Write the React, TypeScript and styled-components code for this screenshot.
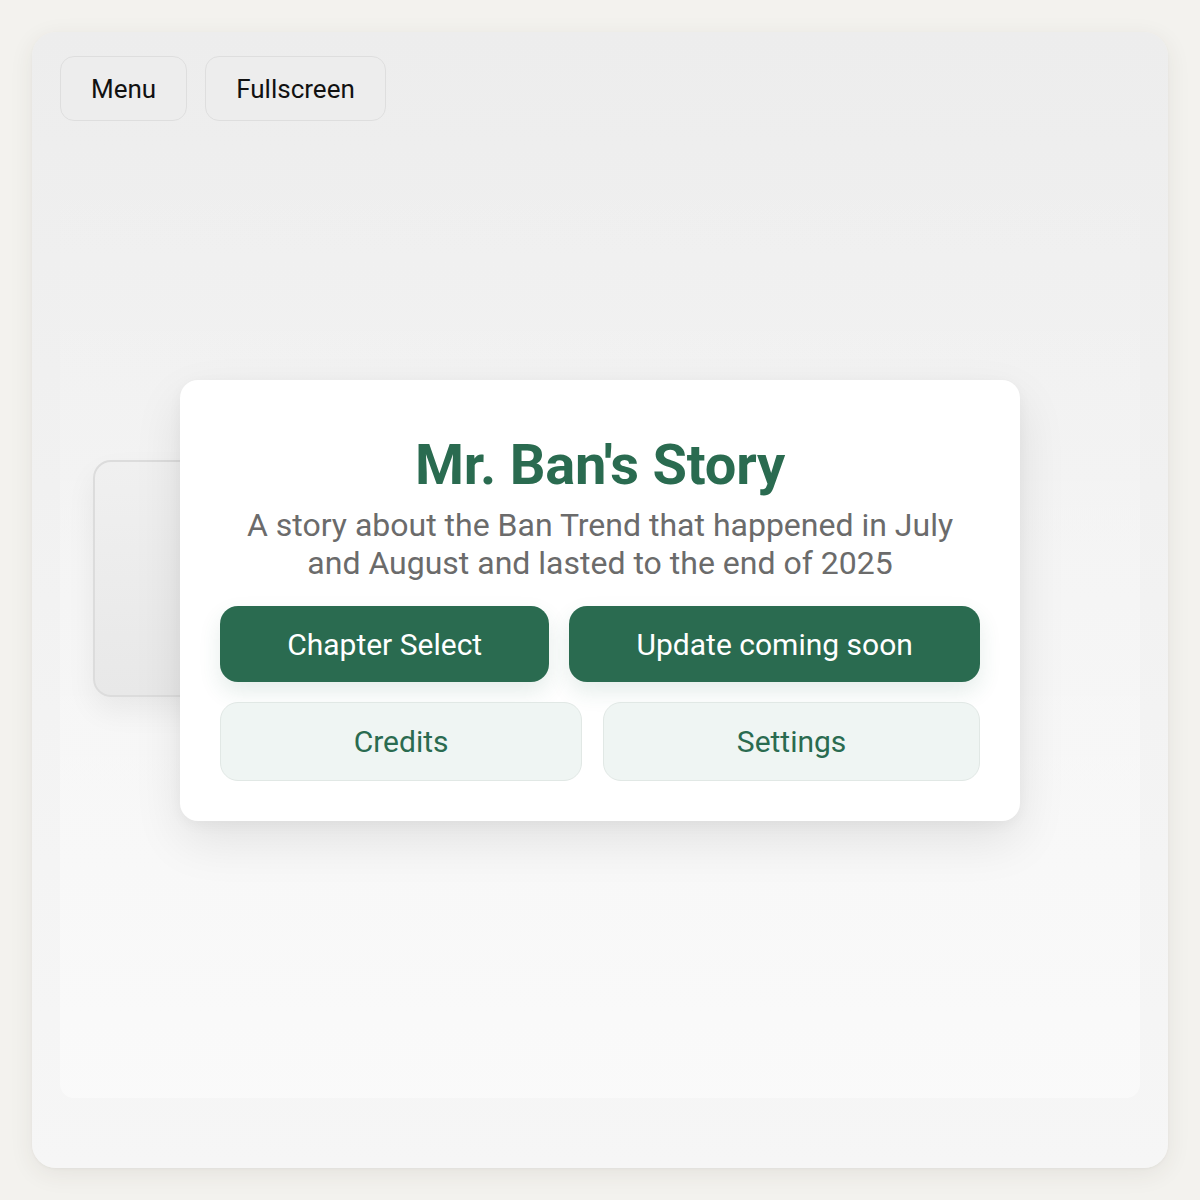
import styled, { createGlobalStyle } from 'styled-components';

const GlobalStyle = createGlobalStyle`
  html, body {
    margin: 0;
    padding: 0;
    background: #f3f2ee;
  }
  body {
    font-family: Roboto, "Noto Sans", "Liberation Sans", sans-serif;
  }
  * {
    box-sizing: border-box;
  }
`;

const Page = styled.div`
  width: 1200px;
  height: 1200px;
  padding: 32px;
`;

const Frame = styled.div`
  position: relative;
  height: 100%;
  display: flex;
  flex-direction: column;
  padding: 24px 28px 70px;
  gap: 20px;
  border-radius: 24px;
  background: linear-gradient(180deg, #ededed 0%, #f3f3f3 60%, #f6f6f6 100%);
  box-shadow: 0 6px 24px rgba(60, 55, 40, 0.08), 0 1px 3px rgba(0, 0, 0, 0.04);
  overflow: hidden;
`;

const Toolbar = styled.div`
  display: flex;
  gap: 18px;
`;

const ToolButton = styled.button`
  height: 65px;
  padding: 0 30px;
  font-family: Roboto, "Liberation Sans", sans-serif;
  font-size: 26px;
  color: #111;
  background: #ededed;
  border: 1.5px solid #dedede;
  border-radius: 14px;
  cursor: pointer;
`;

const Stage = styled.div`
  flex: 1;
  display: flex;
  align-items: flex-start;
  padding: 319px 0 0 33px;
  border-radius: 14px;
  background: linear-gradient(180deg, rgba(255, 255, 255, 0) 0%, rgba(255, 255, 255, 0.3) 60%, rgba(255, 255, 255, 0.45) 100%);
`;

const DialogBox = styled.div`
  width: 640px;
  height: 237px;
  border-radius: 18px;
  border: 2.5px solid #dcdcdc;
  background: linear-gradient(180deg, #f0f0f0 0%, #e8e8e8 100%);
  box-shadow: 0 14px 30px rgba(0, 0, 0, 0.06);
`;

const Modal = styled.div`
  position: absolute;
  left: 148px;
  top: 348px;
  width: 840px;
  display: flex;
  flex-direction: column;
  align-items: center;
  padding: 40px;
  background: #ffffff;
  border-radius: 18px;
  box-shadow: 0 20px 50px rgba(0, 0, 0, 0.09), 0 4px 14px rgba(0, 0, 0, 0.04);
`;

const Title = styled.h1`
  margin: 14px 0 0;
  font-size: 56px;
  line-height: 62px;
  font-weight: 700;
  color: #2a6b50;
  letter-spacing: -0.2px;
`;

const Subtitle = styled.p`
  margin: 10px 0 24px;
  font-size: 32px;
  line-height: 38px;
  color: #6b6b6b;
  text-align: center;
`;

const Buttons = styled.div`
  width: 100%;
  display: flex;
  flex-direction: column;
  gap: 20px;
`;

const ButtonRow = styled.div<{ $gap: number }>`
  width: 100%;
  display: flex;
  gap: ${(p) => p.$gap}px;
`;

const ActionButton = styled.button<{ $primary?: boolean }>`
  flex: 1 1 auto;
  height: ${(p) => (p.$primary ? 76 : 79)}px;
  padding: 0 24px;
  font-family: Roboto, "Liberation Sans", sans-serif;
  font-size: 30px;
  color: ${(p) => (p.$primary ? '#ffffff' : '#2a6b50')};
  background: ${(p) => (p.$primary ? '#2a6b50' : '#eff5f3')};
  border: ${(p) => (p.$primary ? 'none' : '1.5px solid #e1e8e5')};
  border-radius: 18px;
  box-shadow: ${(p) => (p.$primary ? '0 10px 22px rgba(42, 107, 80, 0.12)' : 'none')};
  cursor: pointer;
`;

export default function App() {
  return (
    <>
      <GlobalStyle />
      <Page>
        <Frame>
          <Toolbar>
            <ToolButton>Menu</ToolButton>
            <ToolButton>Fullscreen</ToolButton>
          </Toolbar>
          <Stage>
            <DialogBox />
          </Stage>
          <Modal>
            <Title>Mr. Ban's Story</Title>
            <Subtitle>
              A story about the Ban Trend that happened in July
              <br />
              and August and lasted to the end of 2025
            </Subtitle>
            <Buttons>
              <ButtonRow $gap={20}>
                <ActionButton $primary>Chapter Select</ActionButton>
                <ActionButton $primary>Update coming soon</ActionButton>
              </ButtonRow>
              <ButtonRow $gap={21}>
                <ActionButton>Credits</ActionButton>
                <ActionButton>Settings</ActionButton>
              </ButtonRow>
            </Buttons>
          </Modal>
        </Frame>
      </Page>
    </>
  );
}
